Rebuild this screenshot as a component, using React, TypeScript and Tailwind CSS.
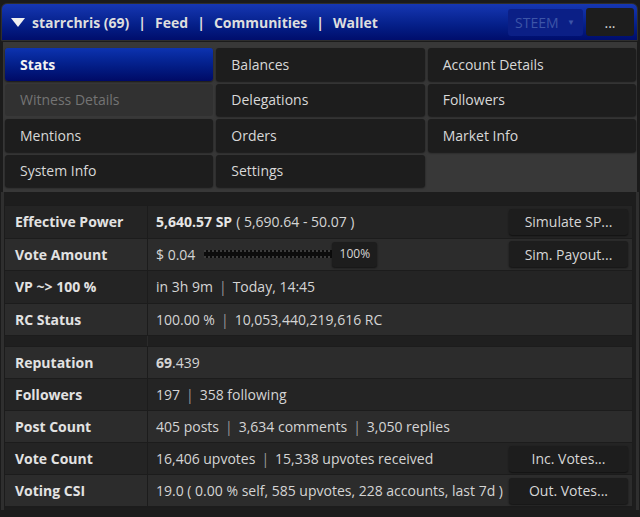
import React from 'react'

const font = { fontFamily: '"Open Sans", "Noto Sans", sans-serif' }

const Sep = () => <span className="mx-[6px] text-[#9a9a9a]">|</span>

const Btn = ({ children }: { children: React.ReactNode }) => (
  <button className="h-[26px] w-[119px] shrink-0 rounded-[3px] bg-[#1d1d1d] text-[14px] text-[#d6d6d6] shadow-[0_1px_2px_rgba(0,0,0,.6)]">
    {children}
  </button>
)

type Row = { label: string; value: React.ReactNode; action?: string; light?: boolean; tall?: boolean }

const rowsTop: Row[] = [
  {
    label: 'Effective Power',
    value: (
      <>
        <b className="mr-[4px] font-bold text-[#e6e6e6]">5,640.57 SP</b>( 5,690.64 - 50.07 )
      </>
    ),
    action: 'Simulate SP...',
    tall: true,
  },
  {
    label: 'Vote Amount',
    value: (
      <span className="flex items-center">
        $ 0.04
        <span className="ml-[9px] h-[8px] w-[130px] border-y-2 border-dotted border-[#3c3c3c] bg-[#0c0c0c]" />
        <span className="-ml-[2px] flex h-[25px] w-[45px] items-center justify-center rounded-[3px] bg-[#1d1d1d] text-[12px] text-[#d6d6d6] shadow-[0_1px_2px_rgba(0,0,0,.6)]">
          100%
        </span>
      </span>
    ),
    action: 'Sim. Payout...',
    light: true,
    tall: true,
  },
  {
    label: 'VP ~> 100 %',
    value: (
      <>
        in 3h 9m<Sep />Today, 14:45
      </>
    ),
    tall: true,
  },
  {
    label: 'RC Status',
    value: (
      <>
        100.00 %<Sep />10,053,440,219,616 RC
      </>
    ),
    light: true,
    tall: true,
  },
]

const rowsBottom: Row[] = [
  {
    label: 'Reputation',
    value: (
      <>
        <b className="font-bold">69</b>.439
      </>
    ),
    light: true,
  },
  {
    label: 'Followers',
    value: (
      <>
        197<Sep />358 following
      </>
    ),
  },
  {
    label: 'Post Count',
    value: (
      <>
        405 posts<Sep />3,634 comments<Sep />3,050 replies
      </>
    ),
    light: true,
  },
  {
    label: 'Vote Count',
    value: (
      <>
        16,406 upvotes<Sep />15,338 upvotes received
      </>
    ),
    action: 'Inc. Votes...',
  },
  {
    label: 'Voting CSI',
    value: <>19.0 ( 0.00 % self, 585 upvotes, 228 accounts, last 7d )</>,
    action: 'Out. Votes...',
    light: true,
  },
]

const StatRow = ({ row }: { row: Row }) => (
  <div
    className={
      'flex border-b border-[#1c1c1c] ' +
      (row.tall ? 'h-[32.5px] ' : 'h-[32px] ') +
      (row.light ? 'bg-[#2c2c2c]' : 'bg-[#242424]')
    }
  >
    <div className="flex w-[143px] shrink-0 items-center border-r border-[#1c1c1c] pl-[10px] text-[14px] font-bold text-[#e2e2e2]">
      {row.label}
    </div>
    <div className="flex min-w-0 flex-1 items-center justify-between pl-[8px] pr-[4px] text-[14px] whitespace-nowrap text-[#d4d4d4]">
      <span className="flex items-center">{row.value}</span>
      {row.action && <Btn>{row.action}</Btn>}
    </div>
  </div>
)

const menu = [
  'Stats',
  'Balances',
  'Account Details',
  'Witness Details',
  'Delegations',
  'Followers',
  'Mentions',
  'Orders',
  'Market Info',
  'System Info',
  'Settings',
]

export default function App() {
  return (
    <div className="h-[517px] w-[640px] overflow-hidden bg-[#1b1b1b] pt-[3px]" style={font}>
      {/* Top bar */}
      <div className="mr-[2px] ml-[1px] flex h-[38px] items-center rounded-t-[6px] border border-[#2e2e2e] bg-gradient-to-b from-[#1637b3] to-[#000d6c] pr-[3px] pl-[9px]">
        <svg width="14" height="9" viewBox="0 0 14 9" className="mr-[7px]">
          <path d="M0 0h14L7 9Z" fill="#f0f0f0" />
        </svg>
        <span className="text-[14px] font-bold text-[#dedede]">
          starrchris (69)
          <span className="mx-[9px]">|</span>Feed<span className="mx-[9px]">|</span>Communities
          <span className="mx-[9px]">|</span>Wallet
        </span>
        <div className="ml-auto flex h-[27px] w-[75px] items-center justify-between rounded-[3px] bg-[#0b1f86] pr-[8px] pl-[7px] text-[14px] text-[#3d55a8]">
          STEEM<span className="text-[8px]">▼</span>
        </div>
        <div className="ml-[3px] flex h-[28px] w-[48px] items-center justify-center rounded-[3px] bg-[#1d1d1d] text-[14px] text-[#dcdcdc]">
          ...
        </div>
      </div>

      {/* Menu */}
      <div className="mx-[3px] mt-[1px] grid grid-cols-3 gap-x-[3px] gap-y-[3px] bg-[#383838] pt-[6px] pr-[1px] pb-[5px] pl-[2px]">
        {menu.map((m) => {
          const active = m === 'Stats'
          const off = m === 'Witness Details'
          return (
            <div
              key={m}
              className={
                'flex h-[32.5px] items-center rounded-[3px] pl-[15px] text-[14px] ' +
                (active
                  ? 'bg-gradient-to-b from-[#0d33b0] to-[#000a66] font-bold text-[#f2f2f2] shadow-[0_1px_2px_rgba(0,0,0,.6)]'
                  : off
                    ? 'bg-[#313131] text-[#747474]'
                    : 'bg-[#1d1d1d] text-[#d8d8d8] shadow-[0_1px_2px_rgba(0,0,0,.6)]')
              }
            >
              {m}
            </div>
          )
        })}
      </div>

      {/* Stats table */}
      <div className="mx-[1px] border-x-[3px] border-[#2f2f2f] bg-[#1d1d1d] pt-[13px] pb-[2px]">
        <div className="mr-[3px] border border-[#1c1c1c]">
          {rowsTop.map((r) => (
            <StatRow key={r.label} row={r} />
          ))}
          <div className="flex h-[11px] border-b border-[#1c1c1c] bg-[#1f1f1f]">
            <div className="w-[143px] border-r border-[#2a2a2a]" />
          </div>
          {rowsBottom.map((r) => (
            <StatRow key={r.label} row={r} />
          ))}
        </div>
      </div>
    </div>
  )
}
